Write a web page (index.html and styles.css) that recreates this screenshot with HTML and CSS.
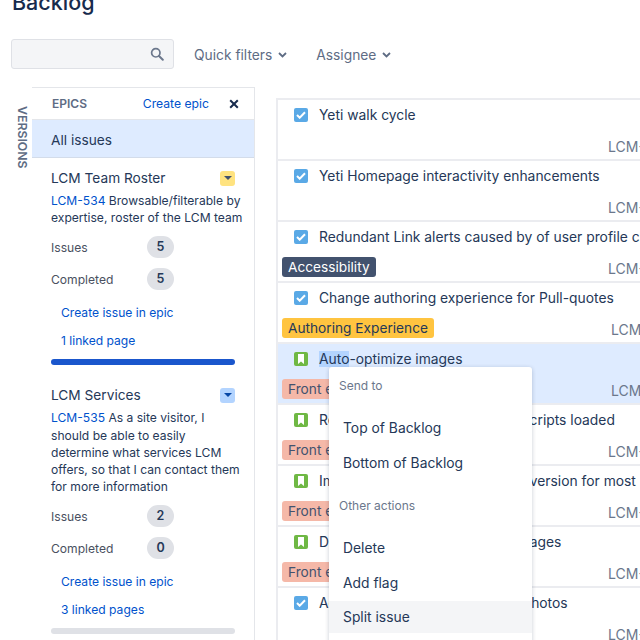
FILE: index.html
```html
<!DOCTYPE html>
<html lang="en">
<head>
<meta charset="utf-8">
<title>Backlog</title>
<link rel="stylesheet" href="styles.css">
</head>
<body>
<div class="page">
  <h1 class="title">Backlog</h1>
  <div class="toolbar">
    <div class="search">
      <svg class="search-icon" width="14" height="14" viewBox="0 0 14 14"><circle cx="5.8" cy="5.8" r="4.2" fill="none" stroke="#6b778c" stroke-width="1.7"/><path d="M9 9l3.8 3.8" stroke="#6b778c" stroke-width="2" stroke-linecap="round"/></svg>
    </div>
    <div class="filter">Quick filters <svg width="9" height="6" viewBox="0 0 9 6"><path d="M1 1l3.5 3.5L8 1" fill="none" stroke="#5e6c84" stroke-width="1.8"/></svg></div>
    <div class="filter">Assignee <svg width="9" height="6" viewBox="0 0 9 6"><path d="M1 1l3.5 3.5L8 1" fill="none" stroke="#5e6c84" stroke-width="1.8"/></svg></div>
  </div>
  <div class="board">
    <div class="versions"><span>VERSIONS</span></div>
    <aside class="epics">
      <div class="epics-head">
        <span class="epics-label">EPICS</span>
        <a class="link create-epic">Create epic</a>
        <svg class="close" width="10" height="10" viewBox="0 0 10 10"><path d="M1.2 1.2l7.6 7.6M8.8 1.2L1.2 8.8" stroke="#172b4d" stroke-width="2"/></svg>
      </div>
      <div class="all-issues">All issues</div>
      <section class="epic">
        <div class="epic-title"><span>LCM Team Roster</span><span class="toggle toggle-yellow"></span></div>
        <p class="epic-desc"><a class="link">LCM-534</a> Browsable/filterable by expertise, roster of the LCM team</p>
        <div class="stat"><span>Issues</span><b class="badge">5</b></div>
        <div class="stat"><span>Completed</span><b class="badge">5</b></div>
        <div class="epic-links">
          <a class="link epic-link">Create issue in epic</a>
          <a class="link epic-link">1 linked page</a>
        </div>
        <div class="progress progress-full"></div>
      </section>
      <section class="epic">
        <div class="epic-title"><span>LCM Services</span><span class="toggle toggle-blue"></span></div>
        <p class="epic-desc"><a class="link">LCM-535</a> As a site visitor, I should be able to easily determine what services LCM offers, so that I can contact them for more information</p>
        <div class="stat"><span>Issues</span><b class="badge">2</b></div>
        <div class="stat"><span>Completed</span><b class="badge">0</b></div>
        <div class="epic-links">
          <a class="link epic-link">Create issue in epic</a>
          <a class="link epic-link">3 linked pages</a>
        </div>
        <div class="progress"></div>
      </section>
    </aside>
    <main class="issues">
      <div class="issue">
        <div class="issue-top"><span class="type type-task"><svg width="10" height="8" viewBox="0 0 10 8"><path d="M1 4l2.7 2.7L9 1.2" fill="none" stroke="#fff" stroke-width="2"/></svg></span><span class="summary">Yeti walk cycle</span></div>
        <div class="issue-bottom"><span class="key">LCM-</span></div>
      </div>
      <div class="issue">
        <div class="issue-top"><span class="type type-task"><svg width="10" height="8" viewBox="0 0 10 8"><path d="M1 4l2.7 2.7L9 1.2" fill="none" stroke="#fff" stroke-width="2"/></svg></span><span class="summary">Yeti Homepage interactivity enhancements</span></div>
        <div class="issue-bottom"><span class="key">LCM-</span></div>
      </div>
      <div class="issue">
        <div class="issue-top"><span class="type type-task"><svg width="10" height="8" viewBox="0 0 10 8"><path d="M1 4l2.7 2.7L9 1.2" fill="none" stroke="#fff" stroke-width="2"/></svg></span><span class="summary">Redundant Link alerts caused by of user profile changes</span></div>
        <div class="issue-bottom"><span class="label label-dark">Accessibility</span><span class="key">LCM-</span></div>
      </div>
      <div class="issue">
        <div class="issue-top"><span class="type type-task"><svg width="10" height="8" viewBox="0 0 10 8"><path d="M1 4l2.7 2.7L9 1.2" fill="none" stroke="#fff" stroke-width="2"/></svg></span><span class="summary">Change authoring experience for Pull-quotes</span></div>
        <div class="issue-bottom"><span class="label label-yellow">Authoring Experience</span><span class="key key-narrow">LCM</span></div>
      </div>
      <div class="issue issue-selected">
        <div class="issue-top"><span class="type type-story"><svg width="8" height="10" viewBox="0 0 8 10"><path d="M1 0h6v10L4 7.4 1 10z" fill="#fff"/></svg></span><span class="summary"><mark class="selection">Auto</mark>-optimize images</span></div>
        <div class="issue-bottom"><span class="label label-red">Front end</span><span class="key key-narrow">LCM</span></div>
      </div>
      <div class="issue">
        <div class="issue-top"><span class="type type-story"><svg width="8" height="10" viewBox="0 0 8 10"><path d="M1 0h6v10L4 7.4 1 10z" fill="#fff"/></svg></span><span class="summary">Reduce page weight until after scripts loaded</span></div>
        <div class="issue-bottom"><span class="label label-red">Front end</span><span class="key">LCM-</span></div>
      </div>
      <div class="issue">
        <div class="issue-top"><span class="type type-story"><svg width="8" height="10" viewBox="0 0 8 10"><path d="M1 0h6v10L4 7.4 1 10z" fill="#fff"/></svg></span><span class="summary">Implement a responsive images version for most</span></div>
        <div class="issue-bottom"><span class="label label-red">Front end</span><span class="key">LCM-</span></div>
      </div>
      <div class="issue">
        <div class="issue-top"><span class="type type-story"><svg width="8" height="10" viewBox="0 0 8 10"><path d="M1 0h6v10L4 7.4 1 10z" fill="#fff"/></svg></span><span class="summary">Define the size of all the hero images</span></div>
        <div class="issue-bottom"><span class="label label-red">Front end</span><span class="key">LCM-</span></div>
      </div>
      <div class="issue">
        <div class="issue-top"><span class="type type-task"><svg width="10" height="8" viewBox="0 0 10 8"><path d="M1 4l2.7 2.7L9 1.2" fill="none" stroke="#fff" stroke-width="2"/></svg></span><span class="summary">Add alt text to all of the gallery photos</span></div>
        <div class="issue-bottom"><span class="key">LCM-</span></div>
      </div>
    </main>
  </div>
  <div class="menu">
    <div class="menu-heading">Send to</div>
    <div class="menu-item">Top of Backlog</div>
    <div class="menu-item">Bottom of Backlog</div>
    <div class="menu-heading menu-heading-second">Other actions</div>
    <div class="menu-item">Delete</div>
    <div class="menu-item">Add flag</div>
    <div class="menu-item menu-item-hover">Split issue</div>
  </div>
</div>
</body>
</html>
```
FILE: styles.css
```css
* { box-sizing: border-box; }
html, body { margin: 0; padding: 0; }
body {
  width: 640px;
  height: 640px;
  overflow: hidden;
  background: #fff;
  font-family: Inter, "Liberation Sans", sans-serif;
  color: #253858;
  font-size: 14px;
}
.page { position: relative; width: 640px; height: 640px; overflow: hidden; }
.title {
  margin: -12px 0 0 12px;
  height: 29px;
  font-size: 21.5px;
  line-height: 29px;
  font-weight: 500;
  color: #172b4d;
}
.toolbar {
  display: flex;
  align-items: center;
  margin: 22px 0 0 11px;
  height: 30px;
}
.search {
  width: 163px;
  height: 30px;
  background: #f4f5f7;
  border: 1px solid #dfe1e6;
  border-radius: 3px;
  display: flex;
  align-items: center;
  justify-content: flex-end;
  padding-right: 9px;
  margin-right: 20px;
}
.filter {
  color: #5e6c84;
  font-size: 13.8px;
  margin-right: 29px;
  padding-top: 1px;
  display: flex;
  align-items: center;
  gap: 6px;
}
.board { display: flex; margin-top: 18px; height: 560px; }
.versions {
  width: 32px;
  padding: 19px 0 0 15px;
}
.versions span {
  display: block;
  writing-mode: vertical-rl;
  font-size: 12.3px;
  font-weight: 600;
  color: #5e6c84;
}
.epics {
  width: 223px;
  flex: none;
  border-top: 1px solid #e4e6ea;
  border-right: 1px solid #e4e6ea;
}
.epics-head {
  display: flex;
  align-items: center;
  height: 32px;
  padding: 0 15px 0 20px;
  border-bottom: 1px solid #e4e6ea;
}
.epics-label { font-size: 12px; font-weight: 600; color: #5e6c84; flex: 1; }
.create-epic { font-size: 12.2px; margin-right: 20px; }
.link { color: #0052cc; text-decoration: none; }
.all-issues {
  height: 38px;
  background: #deebff;
  border-bottom: 1px solid #d3dcea;
  padding-left: 19px;
  line-height: 40px;
  font-size: 13.7px;
}
.epic { padding: 11px 19px 0 19px; margin-bottom: 10px; }
.epic-title {
  display: flex;
  justify-content: space-between;
  align-items: center;
  height: 18px;
  font-size: 13.7px;
}
.toggle {
  width: 15px;
  height: 15px;
  border-radius: 3px;
  position: relative;
  display: block;
}
.toggle::after {
  content: "";
  position: absolute;
  left: 3.5px;
  top: 5.5px;
  border: 4px solid transparent;
  border-bottom: 0;
  border-top-color: #42526e;
}
.toggle-yellow { background: #ffe380; }
.toggle-blue { background: #b3d4ff; }
.toggle-blue::after { border-top-color: #0747a6; }
.epic-desc {
  margin: 5px -9px 10px 0;
  font-size: 12.1px;
  line-height: 17.2px;
}
.stat {
  display: flex;
  align-items: center;
  height: 22px;
  margin-bottom: 10px;
  font-size: 12.1px;
  color: #4a5060;
}
.stat span { width: 96px; }
.badge {
  width: 27px;
  height: 22px;
  border-radius: 11px;
  background: #dfe1e6;
  color: #253858;
  font-size: 12.5px;
  font-weight: 600;
  text-align: center;
  line-height: 22px;
}
.epic-links { margin-top: -1px; }
.epic-link {
  display: block;
  font-size: 12.1px;
  line-height: 28px;
  padding-left: 10px;
}
.progress {
  height: 6px;
  margin-top: 4px;
  border-radius: 3px;
  background: #dfe1e6;
}
.progress-full { background: #1a56cc; }
.issues {
  flex: 1;
  margin-left: 21px;
  border-left: 2px solid #ebecf0;
  margin-top: 11px;
  min-width: 0;
  overflow: hidden;
}
.issue {
  height: 61px;
  border-top: 2px solid #ebecf0;
  padding-top: 5px;
  white-space: nowrap;
}
.issue-selected { background: #deebff; }
.issue-top {
  display: flex;
  align-items: center;
  height: 20px;
  padding-left: 16px;
}
.type {
  width: 14px;
  height: 14px;
  border-radius: 2px;
  display: flex;
  align-items: center;
  justify-content: center;
  margin-right: 11px;
  flex: none;
}
.type-task { background: #5aa9e6; }
.type-story { background: #6fb844; }
.summary { color: #253858; font-size: 13.85px; }
.selection { background: #b3d4ff; color: inherit; }
.issue-bottom {
  display: flex;
  align-items: flex-start;
  justify-content: space-between;
  height: 22px;
  margin-top: 10px;
  padding-left: 4px;
}
.label {
  height: 20px;
  line-height: 20px;
  padding: 0 6px;
  border-radius: 3px;
  font-size: 13.7px;
}
.label-dark { background: #42526e; color: #fff; }
.label-yellow { background: #ffc440; color: #253858; }
.label-red { background: #f5b8a8; color: #42526e; }
.key {
  color: #6b778c;
  font-size: 14px;
  line-height: 20px;
  margin-top: 2px;
  margin-left: auto;
  width: 32px;
  flex: none;
}
.key-narrow { width: 29px; }
.menu {
  position: absolute;
  left: 329px;
  top: 367px;
  width: 203px;
  height: 290px;
  background: #fff;
  border-radius: 3px;
  box-shadow: 0 1px 4px rgba(9, 30, 66, 0.22);
  padding-top: 10px;
}
.menu-heading {
  font-size: 12px;
  color: #6b778c;
  padding-left: 10px;
  height: 18px;
  line-height: 18px;
  margin-bottom: 16px;
}
.menu-heading-second { margin-top: 16px; }
.menu-item {
  height: 35px;
  line-height: 35px;
  padding-left: 14px;
  font-size: 13.85px;
  color: #253858;
}
.menu-item-hover { background: #f4f5f7; height: 32px; line-height: 33px; }
```
